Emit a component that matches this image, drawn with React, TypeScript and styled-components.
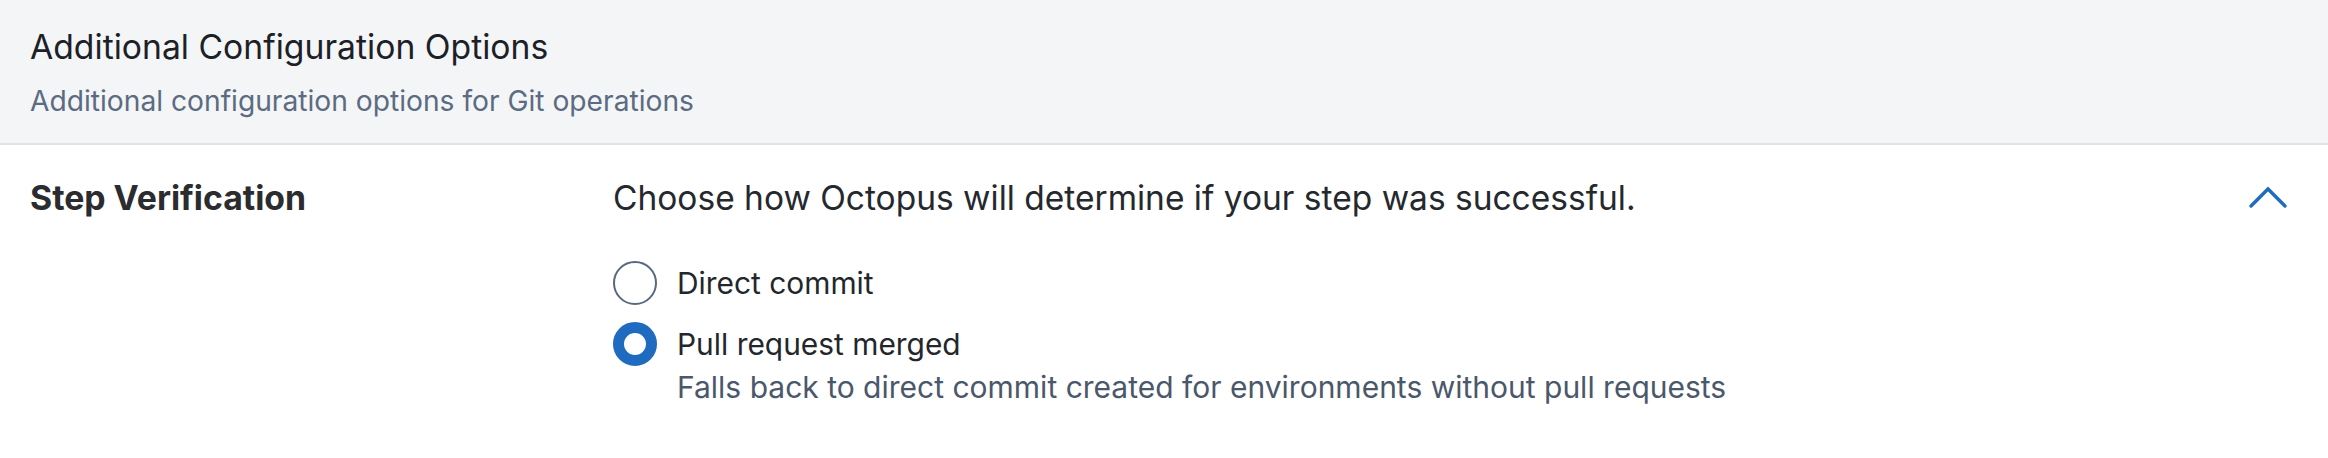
import React from "react";
import styled, { createGlobalStyle } from "styled-components";

const GlobalStyle = createGlobalStyle`
  html, body {
    margin: 0;
    padding: 0;
    background: #ffffff;
  }
  body {
    font-family: Inter, "Noto Sans", "Liberation Sans", sans-serif;
    -webkit-font-smoothing: antialiased;
  }
`;

const Page = styled.div`
  width: 2328px;
  display: flex;
  flex-direction: column;
`;

const SectionHeader = styled.header`
  background: #f4f5f7;
  border-bottom: 2px solid #dfe2e6;
  padding: 27px 30px 24px;
  display: flex;
  flex-direction: column;
  gap: 16px;
`;

const SectionTitle = styled.h2`
  margin: 0;
  font-size: 33.7px;
  line-height: 40px;
  font-weight: 400;
  color: #1c2127;
`;

const SectionDescription = styled.p`
  margin: 0;
  font-size: 28.2px;
  line-height: 36px;
  font-weight: 400;
  color: #5b6b82;
`;

const FieldRow = styled.section`
  display: flex;
  align-items: flex-start;
  padding: 33px 40px 0 30px;
`;

const FieldLabel = styled.div`
  width: 583px;
  flex: none;
  font-size: 33.8px;
  line-height: 40px;
  font-weight: 700;
  color: #2a2c2f;
`;

const FieldBody = styled.div`
  flex: 1;
  display: flex;
  flex-direction: column;
`;

const Prompt = styled.div`
  font-size: 33.5px;
  line-height: 40px;
  color: #25292e;
  margin-bottom: 43px;
`;

const Options = styled.div`
  display: flex;
  flex-direction: column;
  gap: 17px;
`;

const Option = styled.label`
  display: flex;
  flex-direction: column;
  cursor: pointer;
`;

const OptionMain = styled.span`
  display: flex;
  align-items: center;
  gap: 20px;
`;

const RadioCircle = styled.span<{ $checked: boolean }>`
  width: 44px;
  height: 44px;
  box-sizing: border-box;
  flex: none;
  border-radius: 50%;
  background: #ffffff;
  border: ${(p) => (p.$checked ? "11px solid #1f6bbf" : "2px solid #58687f")};
`;

const OptionText = styled.span`
  font-size: 29.9px;
  line-height: 44px;
  color: #23272d;
`;

const OptionHint = styled.span`
  margin-top: 3px;
  padding-left: 64px;
  font-size: 30px;
  line-height: 36px;
  color: #4b576a;
`;

const CollapseButton = styled.button`
  width: 40px;
  height: 40px;
  flex: none;
  padding: 0;
  border: none;
  background: transparent;
  display: flex;
  align-items: center;
  justify-content: center;
  cursor: pointer;
`;

const ChevronUp = () => (
  <svg width="40" height="40" viewBox="0 0 40 40" fill="none" aria-hidden="true">
    <polyline
      points="3,28 20,11 37,28"
      stroke="#1f6bbf"
      strokeWidth="3.4"
      strokeLinecap="round"
      strokeLinejoin="miter"
      fill="none"
    />
  </svg>
);

const options = [
  { id: "direct", label: "Direct commit", hint: "", checked: false },
  {
    id: "pr",
    label: "Pull request merged",
    hint: "Falls back to direct commit created for environments without pull requests",
    checked: true,
  },
];

export default function App() {
  return (
    <Page>
      <GlobalStyle />
      <SectionHeader>
        <SectionTitle>Additional Configuration Options</SectionTitle>
        <SectionDescription>Additional configuration options for Git operations</SectionDescription>
      </SectionHeader>
      <FieldRow>
        <FieldLabel>Step Verification</FieldLabel>
        <FieldBody>
          <Prompt>Choose how Octopus will determine if your step was successful.</Prompt>
          <Options>
            {options.map((o) => (
              <Option key={o.id}>
                <OptionMain>
                  <RadioCircle $checked={o.checked} />
                  <OptionText>{o.label}</OptionText>
                </OptionMain>
                {o.hint && <OptionHint>{o.hint}</OptionHint>}
              </Option>
            ))}
          </Options>
        </FieldBody>
        <CollapseButton aria-label="Collapse">
          <ChevronUp />
        </CollapseButton>
      </FieldRow>
    </Page>
  );
}
